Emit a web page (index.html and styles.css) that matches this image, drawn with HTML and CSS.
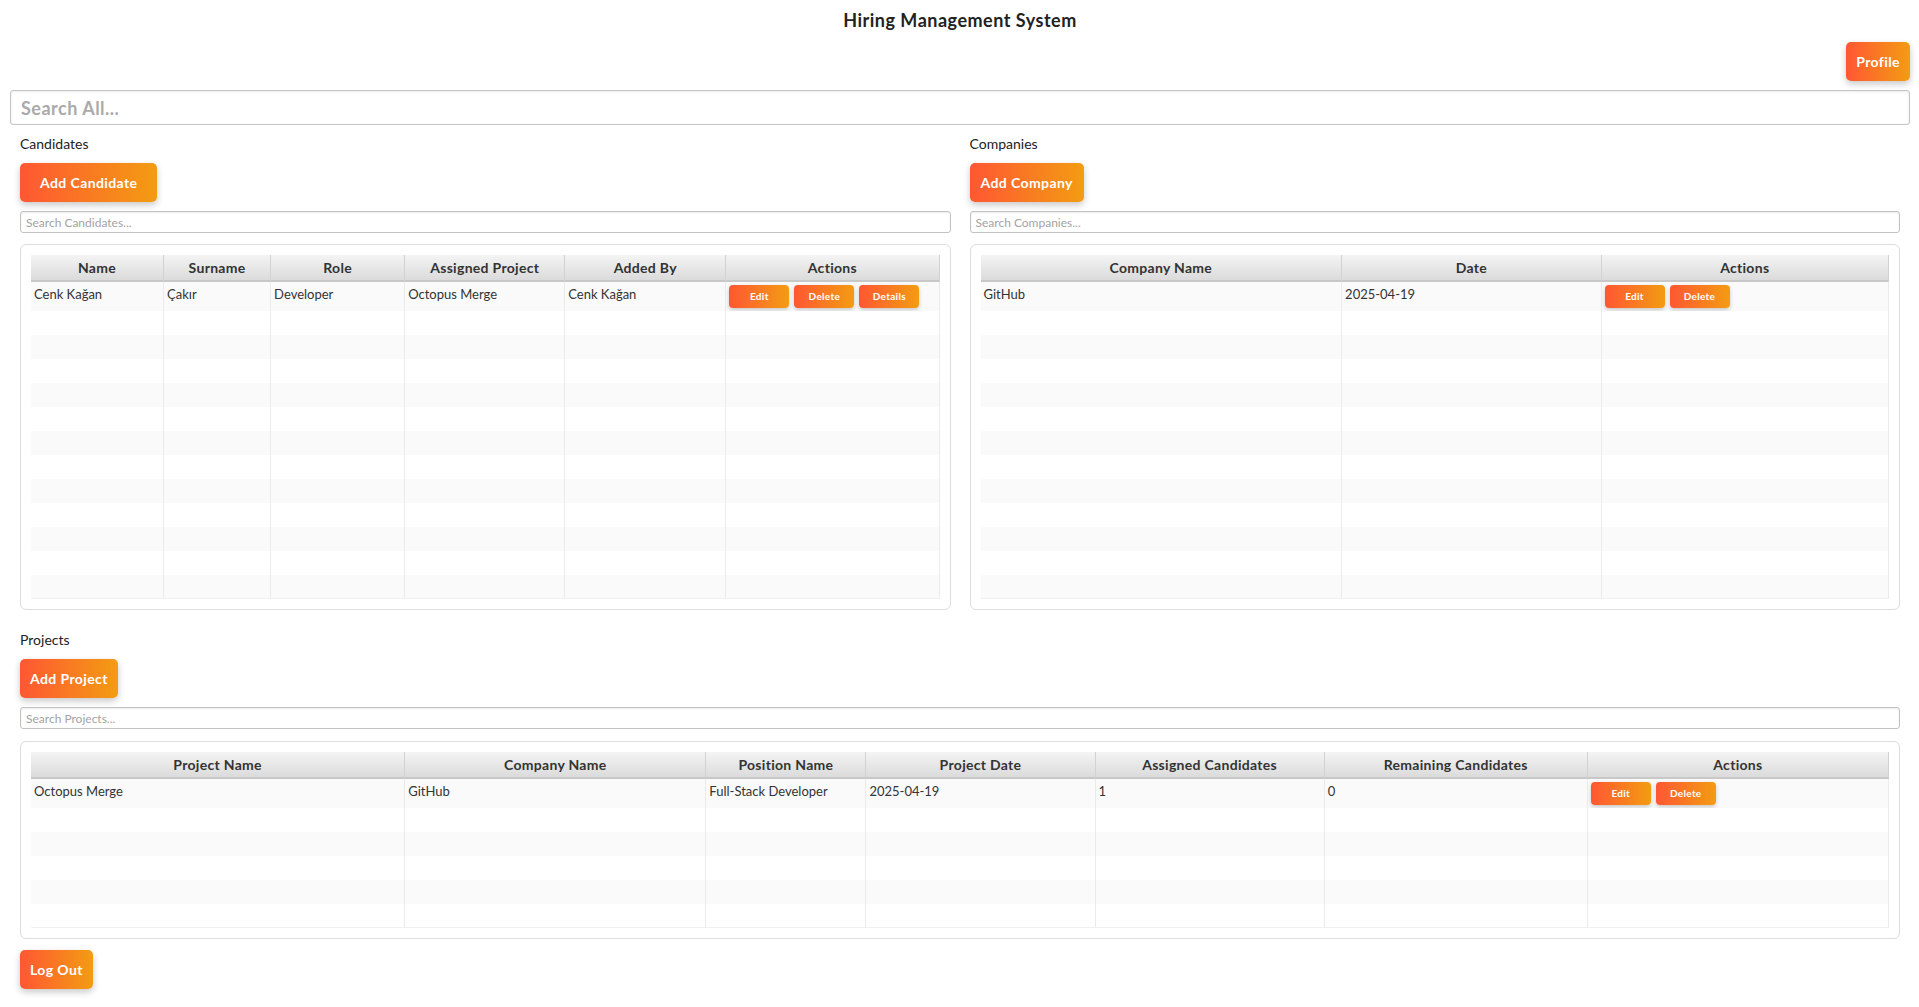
FILE: index.html
```html
<!DOCTYPE html>
<html lang="en">
<head>
<meta charset="utf-8">
<title>Hiring Management System</title>
<link rel="stylesheet" href="styles.css">
</head>
<body>
<h1 class="title">Hiring Management System</h1>
<div class="topbar"><button class="btn">Profile</button></div>
<input class="search-all" type="text" placeholder="Search All...">

<div class="content">
  <div class="two-col">
    <section class="section">
      <div class="label">Candidates</div>
      <button class="btn btn-pad">Add Candidate</button>
      <input class="search-small" type="text" placeholder="Search Candidates...">
      <div class="panel">
        <table class="grid">
          <colgroup><col style="width:133px"><col style="width:107px"><col style="width:134px"><col style="width:160px"><col style="width:161px"><col style="width:213px"></colgroup>
          <thead><tr><th>Name</th><th>Surname</th><th>Role</th><th>Assigned Project</th><th>Added By</th><th>Actions</th></tr></thead>
          <tbody>
            <tr class="data"><td>Cenk Kağan</td><td>Çakır</td><td>Developer</td><td>Octopus Merge</td><td>Cenk Kağan</td><td class="actions"><button class="btn act">Edit</button><button class="btn act">Delete</button><button class="btn act">Details</button></td></tr>
            <tr><td></td><td></td><td></td><td></td><td></td><td></td></tr>
            <tr><td></td><td></td><td></td><td></td><td></td><td></td></tr>
            <tr><td></td><td></td><td></td><td></td><td></td><td></td></tr>
            <tr><td></td><td></td><td></td><td></td><td></td><td></td></tr>
            <tr><td></td><td></td><td></td><td></td><td></td><td></td></tr>
            <tr><td></td><td></td><td></td><td></td><td></td><td></td></tr>
            <tr><td></td><td></td><td></td><td></td><td></td><td></td></tr>
            <tr><td></td><td></td><td></td><td></td><td></td><td></td></tr>
            <tr><td></td><td></td><td></td><td></td><td></td><td></td></tr>
            <tr><td></td><td></td><td></td><td></td><td></td><td></td></tr>
            <tr><td></td><td></td><td></td><td></td><td></td><td></td></tr>
            <tr><td></td><td></td><td></td><td></td><td></td><td></td></tr>
          </tbody>
        </table>
      </div>
    </section>
    <section class="section">
      <div class="label">Companies</div>
      <button class="btn btn-company">Add Company</button>
      <input class="search-small" type="text" placeholder="Search Companies...">
      <div class="panel">
        <table class="grid">
          <colgroup><col style="width:361px"><col style="width:259px"><col style="width:287px"></colgroup>
          <thead><tr><th>Company Name</th><th>Date</th><th>Actions</th></tr></thead>
          <tbody>
            <tr class="data"><td>GitHub</td><td>2025-04-19</td><td class="actions"><button class="btn act">Edit</button><button class="btn act">Delete</button></td></tr>
            <tr><td></td><td></td><td></td></tr>
            <tr><td></td><td></td><td></td></tr>
            <tr><td></td><td></td><td></td></tr>
            <tr><td></td><td></td><td></td></tr>
            <tr><td></td><td></td><td></td></tr>
            <tr><td></td><td></td><td></td></tr>
            <tr><td></td><td></td><td></td></tr>
            <tr><td></td><td></td><td></td></tr>
            <tr><td></td><td></td><td></td></tr>
            <tr><td></td><td></td><td></td></tr>
            <tr><td></td><td></td><td></td></tr>
            <tr><td></td><td></td><td></td></tr>
          </tbody>
        </table>
      </div>
    </section>
  </div>

  <section class="section section-projects">
    <div class="label">Projects</div>
    <button class="btn">Add Project</button>
    <input class="search-small" type="text" placeholder="Search Projects...">
    <div class="panel panel-projects">
      <table class="grid">
        <colgroup><col style="width:374px"><col style="width:301px"><col style="width:160px"><col style="width:229px"><col style="width:229px"><col style="width:263px"><col style="width:301px"></colgroup>
        <thead><tr><th>Project Name</th><th>Company Name</th><th>Position Name</th><th>Project Date</th><th>Assigned Candidates</th><th>Remaining Candidates</th><th>Actions</th></tr></thead>
        <tbody>
          <tr class="data"><td>Octopus Merge</td><td>GitHub</td><td>Full-Stack Developer</td><td>2025-04-19</td><td>1</td><td>0</td><td class="actions"><button class="btn act">Edit</button><button class="btn act">Delete</button></td></tr>
          <tr><td></td><td></td><td></td><td></td><td></td><td></td><td></td></tr>
          <tr><td></td><td></td><td></td><td></td><td></td><td></td><td></td></tr>
          <tr><td></td><td></td><td></td><td></td><td></td><td></td><td></td></tr>
          <tr><td></td><td></td><td></td><td></td><td></td><td></td><td></td></tr>
          <tr><td></td><td></td><td></td><td></td><td></td><td></td><td></td></tr>
        </tbody>
      </table>
    </div>
  </section>

  <div class="footer"><button class="btn">Log Out</button></div>
</div>
</body>
</html>
```

FILE: styles.css
```css
* { box-sizing: border-box; }

html, body { background: #ffffff; }

body {
  margin: 0;
  padding: 0 9px 16px 10px;
  font-family: Lato, "Open Sans", "Liberation Sans", sans-serif;
  color: #222222;
}

.title {
  margin: 0;
  padding-top: 8px;
  font-size: 18px;
  line-height: 24px;
  font-weight: 700;
  letter-spacing: 0.5px;
  text-align: center;
  color: #222222;
}

.topbar {
  display: flex;
  justify-content: flex-end;
  margin-top: 10px;
}

.btn {
  display: inline-block;
  border: 0;
  border-radius: 5px;
  padding: 10px;
  background: linear-gradient(to right, #ff5733, #f39c12);
  color: #ffffff;
  font-family: Lato, "Open Sans", "Liberation Sans", sans-serif;
  font-size: 14px;
  line-height: 19px;
  font-weight: 700;
  letter-spacing: 0.4px;
  box-shadow: 0 3px 7px rgba(0, 0, 0, 0.22);
  cursor: pointer;
}

.btn-pad { padding: 10px 20px; }
.btn-company { padding: 10px 11px; }

.search-all {
  display: block;
  width: 100%;
  height: 35px;
  margin: 9px 0 0;
  padding: 0 10px;
  border: 1px solid #c4c4c4;
  border-radius: 3px;
  box-shadow: inset 0 1px 3px rgba(0, 0, 0, 0.08);
  font-family: Lato, "Open Sans", "Liberation Sans", sans-serif;
  font-size: 18px;
  font-weight: 700;
  letter-spacing: 0.5px;
  color: #333333;
  outline: none;
}
.search-all::placeholder { color: #aaaaaa; }

.content { padding: 0 10px; }

.two-col {
  display: grid;
  grid-template-columns: 1fr 1fr;
  gap: 19px;
}

.section {
  display: flex;
  flex-direction: column;
  align-items: flex-start;
  gap: 9px;
  padding-top: 9px;
  min-width: 0;
}

.section-projects { padding-top: 20px; }

.label {
  font-size: 14px;
  line-height: 20px;
  color: #222222;
}

.search-small {
  display: block;
  width: 100%;
  height: 22px;
  margin: 0;
  padding: 0 5px;
  border: 1px solid #c2c2c2;
  border-radius: 3px;
  box-shadow: inset 0 1px 2px rgba(0, 0, 0, 0.08);
  font-family: Lato, "Open Sans", "Liberation Sans", sans-serif;
  font-size: 12px;
  color: #333333;
  outline: none;
}
.search-small::placeholder { color: #a3a3a3; }

.panel {
  width: 100%;
  margin-top: 2px;
  padding: 10px;
  border: 1px solid #dddddd;
  border-radius: 6px;
  background: #ffffff;
}

.panel-projects { margin-top: 3px; }

.grid {
  width: 100%;
  table-layout: fixed;
  border-collapse: separate;
  border-spacing: 0;
  font-size: 13px;
  color: #333333;
}

.grid th {
  height: 27px;
  padding: 0 3px;
  background: linear-gradient(#f4f4f4, #dbdbdb);
  border-right: 1px solid #d2d2d2;
  border-bottom: 2px solid #c8c8c8;
  font-size: 14px;
  font-weight: 700;
  letter-spacing: 0.3px;
  color: #333333;
  text-align: center;
  white-space: nowrap;
  overflow: hidden;
}

.grid td {
  height: 24px;
  padding: 0 3px;
  border-right: 1px solid #ebebeb;
  vertical-align: top;
  white-space: nowrap;
  overflow: hidden;
  background: #ffffff;
}

.grid tbody tr:nth-child(odd) td { background: #fafafa; }
.grid tbody tr:last-child td { border-bottom: 1px solid #f0f0f0; }

.grid tr.data td {
  height: 29px;
  padding: 4px 3px 0;
  line-height: 16px;
}

.grid tr.data td.actions { padding: 3px 3px 0; }

.act {
  width: 60px;
  height: 23px;
  margin-right: 5px;
  padding: 0;
  border-radius: 4px;
  font-size: 10px;
  line-height: 23px;
  letter-spacing: 0.3px;
  box-shadow: 0 2px 4px rgba(0, 0, 0, 0.2);
  vertical-align: top;
}

.footer { padding-top: 11px; }
```
